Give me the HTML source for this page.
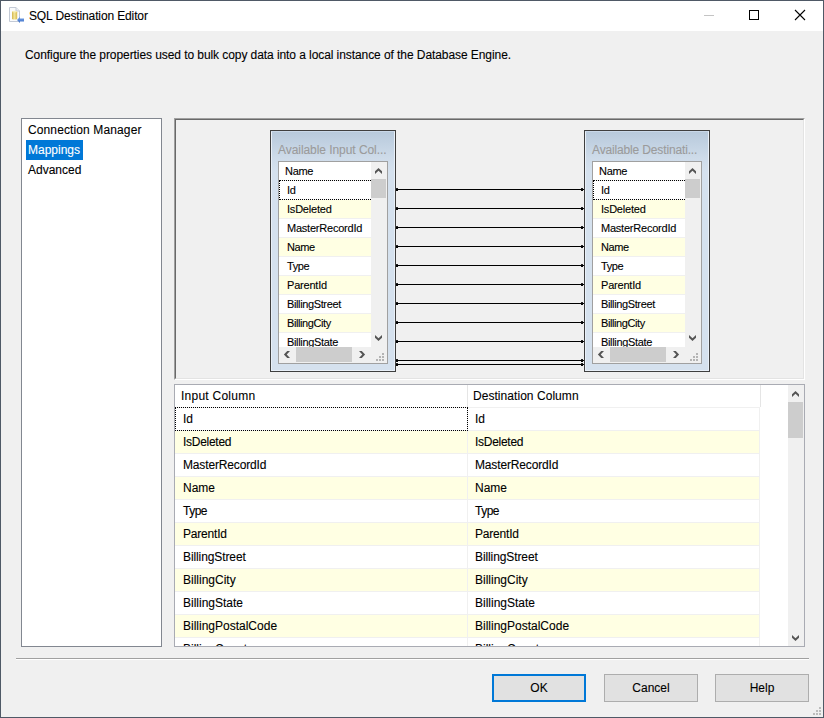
<!DOCTYPE html>
<html><head><meta charset="utf-8"><style>
html,body{margin:0;padding:0;width:824px;height:718px;overflow:hidden;background:#f0f0f0}
.t{position:absolute;font-family:"Liberation Sans",sans-serif;line-height:20px;height:20px;white-space:nowrap;color:#000;-webkit-text-stroke:0.1px currentColor}
</style></head><body>
<div style="position:absolute;left:0px;top:0px;width:824px;height:718px;background:#f0f0f0"></div><div style="position:absolute;left:0px;top:0px;width:824px;height:31px;background:#fff"></div><div style="position:absolute;left:0px;top:0px;width:824px;height:1px;background:#4f5966"></div><div style="position:absolute;left:0px;top:717px;width:824px;height:1px;background:#4f5966"></div><div style="position:absolute;left:0px;top:0px;width:1px;height:718px;background:#4f5966"></div><div style="position:absolute;left:823px;top:0px;width:1px;height:718px;background:#4f5966"></div><svg style="position:absolute;left:6px;top:4px" width="22" height="22" viewBox="6 4 22 22">
<defs><linearGradient id="cyl" x1="0" x2="1" y1="0" y2="0"><stop offset="0" stop-color="#d2b54a"/><stop offset="0.45" stop-color="#f2e49a"/><stop offset="1" stop-color="#d7bb4e"/></linearGradient>
<linearGradient id="arr" x1="0" x2="0" y1="0" y2="1"><stop offset="0" stop-color="#7aa6ea"/><stop offset="1" stop-color="#3c6fc6"/></linearGradient></defs>
<path d="M9.5 7.5 H16 L19.5 11 V21.5 H9.5 Z" fill="#fafbfc" stroke="#c3cad6" stroke-width="1"/>
<path d="M16 7.5 V11 H19.5" fill="#eef0f4" stroke="#c3cad6" stroke-width="1"/>
<rect x="12" y="11" width="5.2" height="8.5" rx="1.2" fill="url(#cyl)"/>
<ellipse cx="14.6" cy="11.6" rx="2.5" ry="0.9" fill="#f7eeb8"/>
<path d="M17 20 L20 16.8 V18.4 H24 V21.4 H20 V23 Z" fill="url(#arr)"/>
</svg><div class="t" style="left:29px;top:6px;font-size:12px;color:#000;letter-spacing:-0.13px">SQL Destination Editor</div><div style="position:absolute;left:704px;top:15px;width:10px;height:1px;background:#c4c4c4"></div><div style="position:absolute;left:749px;top:10px;width:10px;height:10px;border:1px solid #000;box-sizing:border-box"></div><svg style="position:absolute;left:794px;top:9px" width="12" height="12" viewBox="0 0 12 12">
<path d="M1 1 L11 11 M11 1 L1 11" stroke="#000" stroke-width="1.1"/></svg><div class="t" style="left:25px;top:45px;font-size:12px;color:#000;letter-spacing:-0.075px">Configure the properties used to bulk copy data into a local instance of the Database Engine.</div><div style="position:absolute;left:21px;top:118px;width:141px;height:529px;background:#fff;border:1px solid #828790;box-sizing:border-box"></div><div class="t" style="left:28px;top:120px;font-size:12px;color:#000;letter-spacing:0.12px">Connection Manager</div><div style="position:absolute;left:26px;top:140px;width:57px;height:20px;background:#0078d7"></div><div class="t" style="left:28px;top:140px;font-size:12px;color:#fff;">Mappings</div><div class="t" style="left:28px;top:160px;font-size:12px;color:#000;">Advanced</div><div style="position:absolute;left:174px;top:118px;width:631px;height:262px;background:#f0f0f0;border-top:1px solid #a0a0a0;border-left:1px solid #a0a0a0;border-right:1px solid #fff;border-bottom:1px solid #fff;box-sizing:border-box"></div><div style="position:absolute;left:175px;top:119px;width:629px;height:260px;border-top:1px solid #696969;border-left:1px solid #696969;border-right:1px solid #e3e3e3;border-bottom:1px solid #e3e3e3;box-sizing:border-box"></div><div style="position:absolute;left:270px;top:130px;width:126px;height:242px;border:1px solid #3f3f3f;box-sizing:border-box;background:linear-gradient(#b7c9db 0px,#cfdcea 28px,#d5e1ee 40px,#d5e1ee 100%)"></div><div style="position:absolute;left:271px;top:131px;width:124px;height:240px;border:1px solid #e9f0f8;border-top-color:#c9d8e8;box-sizing:border-box"></div><div class="t" style="left:278px;top:140px;font-size:12px;color:#9b9b9b;letter-spacing:-0.06px">Available Input Col...</div><div style="position:absolute;left:278px;top:161px;width:110px;height:203px;background:#fff;border:1px solid #a0a0a0;box-sizing:border-box;overflow:hidden"></div><div class="t" style="left:285px;top:161px;font-size:11px;color:#000;letter-spacing:-0.3px">Name</div><div style="position:absolute;left:279px;top:180px;width:92px;height:167px;overflow:hidden"><div style="position:absolute;left:0;top:0px;width:92px;height:19px;background:#fff;border-top:1px solid #f0f0f0;box-sizing:border-box"></div><div class="t" style="left:8px;top:0px;font-size:11px;letter-spacing:-0.3px">Id</div><div style="position:absolute;left:0;top:19px;width:92px;height:19px;background:#ffffe3;border-top:1px solid #f0f0f0;box-sizing:border-box"></div><div class="t" style="left:8px;top:19px;font-size:11px;letter-spacing:-0.21px">IsDeleted</div><div style="position:absolute;left:0;top:38px;width:92px;height:19px;background:#fff;border-top:1px solid #f0f0f0;box-sizing:border-box"></div><div class="t" style="left:8px;top:38px;font-size:11px;letter-spacing:-0.22px">MasterRecordId</div><div style="position:absolute;left:0;top:57px;width:92px;height:19px;background:#ffffe3;border-top:1px solid #f0f0f0;box-sizing:border-box"></div><div class="t" style="left:8px;top:57px;font-size:11px;letter-spacing:-0.4px">Name</div><div style="position:absolute;left:0;top:76px;width:92px;height:19px;background:#fff;border-top:1px solid #f0f0f0;box-sizing:border-box"></div><div class="t" style="left:8px;top:76px;font-size:11px;letter-spacing:-0.43px">Type</div><div style="position:absolute;left:0;top:95px;width:92px;height:19px;background:#ffffe3;border-top:1px solid #f0f0f0;box-sizing:border-box"></div><div class="t" style="left:8px;top:95px;font-size:11px;letter-spacing:-0.2px">ParentId</div><div style="position:absolute;left:0;top:114px;width:92px;height:19px;background:#fff;border-top:1px solid #f0f0f0;box-sizing:border-box"></div><div class="t" style="left:8px;top:114px;font-size:11px;letter-spacing:-0.375px">BillingStreet</div><div style="position:absolute;left:0;top:133px;width:92px;height:19px;background:#ffffe3;border-top:1px solid #f0f0f0;box-sizing:border-box"></div><div class="t" style="left:8px;top:133px;font-size:11px;letter-spacing:-0.41px">BillingCity</div><div style="position:absolute;left:0;top:152px;width:92px;height:19px;background:#fff;border-top:1px solid #f0f0f0;box-sizing:border-box"></div><div class="t" style="left:8px;top:152px;font-size:11px;letter-spacing:-0.33px">BillingState</div><div style="position:absolute;left:0;top:0;width:110px;height:20px;border:1px dotted #000;box-sizing:border-box"></div></div><div style="position:absolute;left:371px;top:162px;width:16px;height:185px;background:#f0f0f0"></div><div style="position:absolute;left:371px;top:179px;width:15px;height:19px;background:#cdcdcd"></div><div style="position:absolute;left:279px;top:347px;width:108px;height:16px;background:#f0f0f0"></div><div style="position:absolute;left:296px;top:347px;width:56px;height:15px;background:#cdcdcd"></div><div style="position:absolute;left:382px;top:353px;width:2px;height:2px;background:#b4b4b4"></div><div style="position:absolute;left:379px;top:356px;width:2px;height:2px;background:#b4b4b4"></div><div style="position:absolute;left:382px;top:356px;width:2px;height:2px;background:#b4b4b4"></div><div style="position:absolute;left:376px;top:359px;width:2px;height:2px;background:#b4b4b4"></div><div style="position:absolute;left:379px;top:359px;width:2px;height:2px;background:#b4b4b4"></div><div style="position:absolute;left:382px;top:359px;width:2px;height:2px;background:#b4b4b4"></div><div style="position:absolute;left:584px;top:130px;width:126px;height:242px;border:1px solid #3f3f3f;box-sizing:border-box;background:linear-gradient(#b7c9db 0px,#cfdcea 28px,#d5e1ee 40px,#d5e1ee 100%)"></div><div style="position:absolute;left:585px;top:131px;width:124px;height:240px;border:1px solid #e9f0f8;border-top-color:#c9d8e8;box-sizing:border-box"></div><div class="t" style="left:592px;top:140px;font-size:12px;color:#9b9b9b;letter-spacing:-0.15px">Available Destinati...</div><div style="position:absolute;left:592px;top:161px;width:110px;height:203px;background:#fff;border:1px solid #a0a0a0;box-sizing:border-box;overflow:hidden"></div><div class="t" style="left:599px;top:161px;font-size:11px;color:#000;letter-spacing:-0.3px">Name</div><div style="position:absolute;left:593px;top:180px;width:92px;height:167px;overflow:hidden"><div style="position:absolute;left:0;top:0px;width:92px;height:19px;background:#fff;border-top:1px solid #f0f0f0;box-sizing:border-box"></div><div class="t" style="left:8px;top:0px;font-size:11px;letter-spacing:-0.3px">Id</div><div style="position:absolute;left:0;top:19px;width:92px;height:19px;background:#ffffe3;border-top:1px solid #f0f0f0;box-sizing:border-box"></div><div class="t" style="left:8px;top:19px;font-size:11px;letter-spacing:-0.21px">IsDeleted</div><div style="position:absolute;left:0;top:38px;width:92px;height:19px;background:#fff;border-top:1px solid #f0f0f0;box-sizing:border-box"></div><div class="t" style="left:8px;top:38px;font-size:11px;letter-spacing:-0.22px">MasterRecordId</div><div style="position:absolute;left:0;top:57px;width:92px;height:19px;background:#ffffe3;border-top:1px solid #f0f0f0;box-sizing:border-box"></div><div class="t" style="left:8px;top:57px;font-size:11px;letter-spacing:-0.4px">Name</div><div style="position:absolute;left:0;top:76px;width:92px;height:19px;background:#fff;border-top:1px solid #f0f0f0;box-sizing:border-box"></div><div class="t" style="left:8px;top:76px;font-size:11px;letter-spacing:-0.43px">Type</div><div style="position:absolute;left:0;top:95px;width:92px;height:19px;background:#ffffe3;border-top:1px solid #f0f0f0;box-sizing:border-box"></div><div class="t" style="left:8px;top:95px;font-size:11px;letter-spacing:-0.2px">ParentId</div><div style="position:absolute;left:0;top:114px;width:92px;height:19px;background:#fff;border-top:1px solid #f0f0f0;box-sizing:border-box"></div><div class="t" style="left:8px;top:114px;font-size:11px;letter-spacing:-0.375px">BillingStreet</div><div style="position:absolute;left:0;top:133px;width:92px;height:19px;background:#ffffe3;border-top:1px solid #f0f0f0;box-sizing:border-box"></div><div class="t" style="left:8px;top:133px;font-size:11px;letter-spacing:-0.41px">BillingCity</div><div style="position:absolute;left:0;top:152px;width:92px;height:19px;background:#fff;border-top:1px solid #f0f0f0;box-sizing:border-box"></div><div class="t" style="left:8px;top:152px;font-size:11px;letter-spacing:-0.33px">BillingState</div><div style="position:absolute;left:0;top:0;width:110px;height:20px;border:1px dotted #000;box-sizing:border-box"></div></div><div style="position:absolute;left:685px;top:162px;width:16px;height:185px;background:#f0f0f0"></div><div style="position:absolute;left:685px;top:179px;width:15px;height:19px;background:#cdcdcd"></div><div style="position:absolute;left:593px;top:347px;width:108px;height:16px;background:#f0f0f0"></div><div style="position:absolute;left:610px;top:347px;width:56px;height:15px;background:#cdcdcd"></div><div style="position:absolute;left:696px;top:353px;width:2px;height:2px;background:#b4b4b4"></div><div style="position:absolute;left:693px;top:356px;width:2px;height:2px;background:#b4b4b4"></div><div style="position:absolute;left:696px;top:356px;width:2px;height:2px;background:#b4b4b4"></div><div style="position:absolute;left:690px;top:359px;width:2px;height:2px;background:#b4b4b4"></div><div style="position:absolute;left:693px;top:359px;width:2px;height:2px;background:#b4b4b4"></div><div style="position:absolute;left:696px;top:359px;width:2px;height:2px;background:#b4b4b4"></div><div style="position:absolute;left:396px;top:189px;width:188px;height:1px;background:#000"></div><div style="position:absolute;left:396px;top:188px;width:2px;height:3px;background:#000;border-radius:0.6px"></div><div style="position:absolute;left:581px;top:188px;width:2px;height:3px;background:#000;border-radius:0.6px"></div><div style="position:absolute;left:396px;top:208px;width:188px;height:1px;background:#000"></div><div style="position:absolute;left:396px;top:207px;width:2px;height:3px;background:#000;border-radius:0.6px"></div><div style="position:absolute;left:581px;top:207px;width:2px;height:3px;background:#000;border-radius:0.6px"></div><div style="position:absolute;left:396px;top:227px;width:188px;height:1px;background:#000"></div><div style="position:absolute;left:396px;top:226px;width:2px;height:3px;background:#000;border-radius:0.6px"></div><div style="position:absolute;left:581px;top:226px;width:2px;height:3px;background:#000;border-radius:0.6px"></div><div style="position:absolute;left:396px;top:246px;width:188px;height:1px;background:#000"></div><div style="position:absolute;left:396px;top:245px;width:2px;height:3px;background:#000;border-radius:0.6px"></div><div style="position:absolute;left:581px;top:245px;width:2px;height:3px;background:#000;border-radius:0.6px"></div><div style="position:absolute;left:396px;top:265px;width:188px;height:1px;background:#000"></div><div style="position:absolute;left:396px;top:264px;width:2px;height:3px;background:#000;border-radius:0.6px"></div><div style="position:absolute;left:581px;top:264px;width:2px;height:3px;background:#000;border-radius:0.6px"></div><div style="position:absolute;left:396px;top:284px;width:188px;height:1px;background:#000"></div><div style="position:absolute;left:396px;top:283px;width:2px;height:3px;background:#000;border-radius:0.6px"></div><div style="position:absolute;left:581px;top:283px;width:2px;height:3px;background:#000;border-radius:0.6px"></div><div style="position:absolute;left:396px;top:303px;width:188px;height:1px;background:#000"></div><div style="position:absolute;left:396px;top:302px;width:2px;height:3px;background:#000;border-radius:0.6px"></div><div style="position:absolute;left:581px;top:302px;width:2px;height:3px;background:#000;border-radius:0.6px"></div><div style="position:absolute;left:396px;top:322px;width:188px;height:1px;background:#000"></div><div style="position:absolute;left:396px;top:321px;width:2px;height:3px;background:#000;border-radius:0.6px"></div><div style="position:absolute;left:581px;top:321px;width:2px;height:3px;background:#000;border-radius:0.6px"></div><div style="position:absolute;left:396px;top:341px;width:188px;height:1px;background:#000"></div><div style="position:absolute;left:396px;top:340px;width:2px;height:3px;background:#000;border-radius:0.6px"></div><div style="position:absolute;left:581px;top:340px;width:2px;height:3px;background:#000;border-radius:0.6px"></div><div style="position:absolute;left:396px;top:360px;width:188px;height:1px;background:#000"></div><div style="position:absolute;left:396px;top:359px;width:2px;height:3px;background:#000;border-radius:0.6px"></div><div style="position:absolute;left:581px;top:359px;width:2px;height:3px;background:#000;border-radius:0.6px"></div><div style="position:absolute;left:396px;top:364px;width:188px;height:1px;background:#000"></div><div style="position:absolute;left:396px;top:363px;width:2px;height:3px;background:#000;border-radius:0.6px"></div><div style="position:absolute;left:581px;top:363px;width:2px;height:3px;background:#000;border-radius:0.6px"></div><div style="position:absolute;left:174px;top:384px;width:631px;height:263px;background:#fff;border:1px solid #a9abb3;box-sizing:border-box"></div><div style="position:absolute;left:467px;top:385px;width:1px;height:22px;background:#e5e5e5"></div><div style="position:absolute;left:760px;top:385px;width:1px;height:22px;background:#e5e5e5"></div><div class="t" style="left:181px;top:386px;font-size:12px;color:#000;letter-spacing:0.25px">Input Column</div><div class="t" style="left:473px;top:386px;font-size:12px;color:#000;letter-spacing:0.05px">Destination Column</div><div style="position:absolute;left:175px;top:407px;width:613px;height:239px;overflow:hidden"><div style="position:absolute;left:0;top:0px;width:292px;height:23px;background:#fff;border-top:1px solid #f0f0f0;box-sizing:border-box"></div><div style="position:absolute;left:293px;top:0px;width:292px;height:23px;background:#fff;border-top:1px solid #f0f0f0;box-sizing:border-box"></div><div style="position:absolute;left:292px;top:0px;width:1px;height:23px;background:#f0f0f0"></div><div class="t" style="left:8px;top:2px;font-size:12px;letter-spacing:0px">Id</div><div class="t" style="left:300px;top:2px;font-size:12px;letter-spacing:0px">Id</div><div style="position:absolute;left:0;top:23px;width:292px;height:23px;background:#ffffe3;border-top:1px solid #f0f0f0;box-sizing:border-box"></div><div style="position:absolute;left:293px;top:23px;width:292px;height:23px;background:#ffffe3;border-top:1px solid #f0f0f0;box-sizing:border-box"></div><div style="position:absolute;left:292px;top:23px;width:1px;height:23px;background:#f0f0f0"></div><div class="t" style="left:8px;top:25px;font-size:12px;letter-spacing:-0.28px">IsDeleted</div><div class="t" style="left:300px;top:25px;font-size:12px;letter-spacing:-0.28px">IsDeleted</div><div style="position:absolute;left:0;top:46px;width:292px;height:23px;background:#fff;border-top:1px solid #f0f0f0;box-sizing:border-box"></div><div style="position:absolute;left:293px;top:46px;width:292px;height:23px;background:#fff;border-top:1px solid #f0f0f0;box-sizing:border-box"></div><div style="position:absolute;left:292px;top:46px;width:1px;height:23px;background:#f0f0f0"></div><div class="t" style="left:8px;top:48px;font-size:12px;letter-spacing:-0.15px">MasterRecordId</div><div class="t" style="left:300px;top:48px;font-size:12px;letter-spacing:-0.15px">MasterRecordId</div><div style="position:absolute;left:0;top:69px;width:292px;height:23px;background:#ffffe3;border-top:1px solid #f0f0f0;box-sizing:border-box"></div><div style="position:absolute;left:293px;top:69px;width:292px;height:23px;background:#ffffe3;border-top:1px solid #f0f0f0;box-sizing:border-box"></div><div style="position:absolute;left:292px;top:69px;width:1px;height:23px;background:#f0f0f0"></div><div class="t" style="left:8px;top:71px;font-size:12px;letter-spacing:0px">Name</div><div class="t" style="left:300px;top:71px;font-size:12px;letter-spacing:0px">Name</div><div style="position:absolute;left:0;top:92px;width:292px;height:23px;background:#fff;border-top:1px solid #f0f0f0;box-sizing:border-box"></div><div style="position:absolute;left:293px;top:92px;width:292px;height:23px;background:#fff;border-top:1px solid #f0f0f0;box-sizing:border-box"></div><div style="position:absolute;left:292px;top:92px;width:1px;height:23px;background:#f0f0f0"></div><div class="t" style="left:8px;top:94px;font-size:12px;letter-spacing:-0.5px">Type</div><div class="t" style="left:300px;top:94px;font-size:12px;letter-spacing:-0.5px">Type</div><div style="position:absolute;left:0;top:115px;width:292px;height:23px;background:#ffffe3;border-top:1px solid #f0f0f0;box-sizing:border-box"></div><div style="position:absolute;left:293px;top:115px;width:292px;height:23px;background:#ffffe3;border-top:1px solid #f0f0f0;box-sizing:border-box"></div><div style="position:absolute;left:292px;top:115px;width:1px;height:23px;background:#f0f0f0"></div><div class="t" style="left:8px;top:117px;font-size:12px;letter-spacing:-0.2px">ParentId</div><div class="t" style="left:300px;top:117px;font-size:12px;letter-spacing:-0.2px">ParentId</div><div style="position:absolute;left:0;top:138px;width:292px;height:23px;background:#fff;border-top:1px solid #f0f0f0;box-sizing:border-box"></div><div style="position:absolute;left:293px;top:138px;width:292px;height:23px;background:#fff;border-top:1px solid #f0f0f0;box-sizing:border-box"></div><div style="position:absolute;left:292px;top:138px;width:1px;height:23px;background:#f0f0f0"></div><div class="t" style="left:8px;top:140px;font-size:12px;letter-spacing:-0.1px">BillingStreet</div><div class="t" style="left:300px;top:140px;font-size:12px;letter-spacing:-0.1px">BillingStreet</div><div style="position:absolute;left:0;top:161px;width:292px;height:23px;background:#ffffe3;border-top:1px solid #f0f0f0;box-sizing:border-box"></div><div style="position:absolute;left:293px;top:161px;width:292px;height:23px;background:#ffffe3;border-top:1px solid #f0f0f0;box-sizing:border-box"></div><div style="position:absolute;left:292px;top:161px;width:1px;height:23px;background:#f0f0f0"></div><div class="t" style="left:8px;top:163px;font-size:12px;letter-spacing:0px">BillingCity</div><div class="t" style="left:300px;top:163px;font-size:12px;letter-spacing:0px">BillingCity</div><div style="position:absolute;left:0;top:184px;width:292px;height:23px;background:#fff;border-top:1px solid #f0f0f0;box-sizing:border-box"></div><div style="position:absolute;left:293px;top:184px;width:292px;height:23px;background:#fff;border-top:1px solid #f0f0f0;box-sizing:border-box"></div><div style="position:absolute;left:292px;top:184px;width:1px;height:23px;background:#f0f0f0"></div><div class="t" style="left:8px;top:186px;font-size:12px;letter-spacing:0px">BillingState</div><div class="t" style="left:300px;top:186px;font-size:12px;letter-spacing:0px">BillingState</div><div style="position:absolute;left:0;top:207px;width:292px;height:23px;background:#ffffe3;border-top:1px solid #f0f0f0;box-sizing:border-box"></div><div style="position:absolute;left:293px;top:207px;width:292px;height:23px;background:#ffffe3;border-top:1px solid #f0f0f0;box-sizing:border-box"></div><div style="position:absolute;left:292px;top:207px;width:1px;height:23px;background:#f0f0f0"></div><div class="t" style="left:8px;top:209px;font-size:12px;letter-spacing:0px">BillingPostalCode</div><div class="t" style="left:300px;top:209px;font-size:12px;letter-spacing:0px">BillingPostalCode</div><div style="position:absolute;left:0;top:230px;width:292px;height:23px;background:#fff;border-top:1px solid #f0f0f0;box-sizing:border-box"></div><div style="position:absolute;left:293px;top:230px;width:292px;height:23px;background:#fff;border-top:1px solid #f0f0f0;box-sizing:border-box"></div><div style="position:absolute;left:292px;top:230px;width:1px;height:23px;background:#f0f0f0"></div><div class="t" style="left:8px;top:232px;font-size:12px;letter-spacing:0px">BillingCountry</div><div class="t" style="left:300px;top:232px;font-size:12px;letter-spacing:0px">BillingCountry</div><div style="position:absolute;left:0;top:0;width:293px;height:24px;border:1px dotted #000;box-sizing:border-box"></div></div><div style="position:absolute;left:759px;top:407px;width:1px;height:239px;background:#f0f0f0"></div><div style="position:absolute;left:788px;top:385px;width:16px;height:261px;background:#f0f0f0"></div><div style="position:absolute;left:788px;top:402px;width:15px;height:36px;background:#cdcdcd"></div><div style="position:absolute;left:16px;top:658px;width:793px;height:1px;background:#a0a0a0"></div><div style="position:absolute;left:16px;top:659px;width:793px;height:1px;background:#fff"></div><div style="position:absolute;left:492px;top:674px;width:94px;height:28px;background:#e1e1e1;border:2px solid #0078d7;box-sizing:border-box"></div><div style="position:absolute;left:604px;top:674px;width:94px;height:28px;background:#e1e1e1;border:1px solid #adadad;box-sizing:border-box"></div><div style="position:absolute;left:715px;top:674px;width:94px;height:28px;background:#e1e1e1;border:1px solid #adadad;box-sizing:border-box"></div><div class="t" style="left:492px;top:678px;width:94px;text-align:center;font-size:12px">OK</div><div class="t" style="left:604px;top:678px;width:94px;text-align:center;font-size:12px">Cancel</div><div class="t" style="left:715px;top:678px;width:94px;text-align:center;font-size:12px">Help</div><div style="position:absolute;left:819px;top:707px;width:2px;height:2px;background:#bcbcbc"></div><div style="position:absolute;left:816px;top:710px;width:2px;height:2px;background:#bcbcbc"></div><div style="position:absolute;left:819px;top:710px;width:2px;height:2px;background:#bcbcbc"></div><div style="position:absolute;left:813px;top:713px;width:2px;height:2px;background:#bcbcbc"></div><div style="position:absolute;left:816px;top:713px;width:2px;height:2px;background:#bcbcbc"></div><div style="position:absolute;left:819px;top:713px;width:2px;height:2px;background:#bcbcbc"></div><svg style="position:absolute;left:0;top:0" width="824" height="718"><g fill="#555555" stroke="none"><path d="M375.00,174.00 L378.50,170.70 L382.00,174.00 L382.00,171.20 L378.50,167.90 L375.00,171.20 Z"/><path d="M375.00,335.00 L378.50,338.30 L382.00,335.00 L382.00,337.80 L378.50,341.10 L375.00,337.80 Z"/><path d="M290.00,351.00 L286.70,354.50 L290.00,358.00 L287.20,358.00 L283.90,354.50 L287.20,351.00 Z"/><path d="M359.00,351.00 L362.30,354.50 L359.00,358.00 L361.80,358.00 L365.10,354.50 L361.80,351.00 Z"/><path d="M689.00,174.00 L692.50,170.70 L696.00,174.00 L696.00,171.20 L692.50,167.90 L689.00,171.20 Z"/><path d="M689.00,335.00 L692.50,338.30 L696.00,335.00 L696.00,337.80 L692.50,341.10 L689.00,337.80 Z"/><path d="M604.00,351.00 L600.70,354.50 L604.00,358.00 L601.20,358.00 L597.90,354.50 L601.20,351.00 Z"/><path d="M673.00,351.00 L676.30,354.50 L673.00,358.00 L675.80,358.00 L679.10,354.50 L675.80,351.00 Z"/><path d="M792.00,397.00 L795.50,393.70 L799.00,397.00 L799.00,394.20 L795.50,390.90 L792.00,394.20 Z"/><path d="M792.00,635.00 L795.50,638.30 L799.00,635.00 L799.00,637.80 L795.50,641.10 L792.00,637.80 Z"/></g></svg>
</body></html>
